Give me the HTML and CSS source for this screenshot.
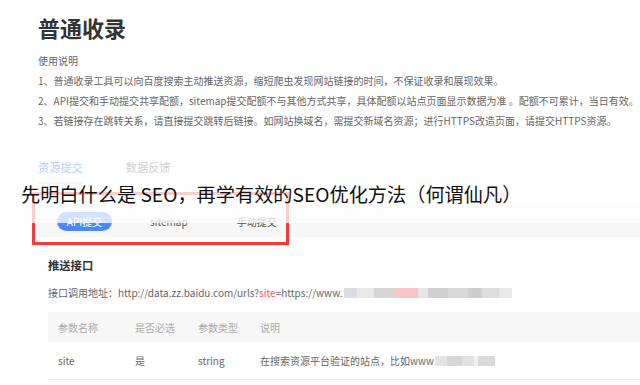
FILE: index.html
```html
<!DOCTYPE html>
<html lang="zh">
<head>
<meta charset="utf-8">
<title>普通收录</title>
<link rel="stylesheet" href="styles.css">
</head>
<body>
<div class="page">
  <h1 class="title">普通收录</h1>
  <div class="intro">
    <p>使用说明</p>
    <p>1、普通收录工具可以向百度搜索主动推送资源，缩短爬虫发现网站链接的时间，不保证收录和展现效果。</p>
    <p>2、API提交和手动提交共享配额，sitemap提交配额不与其他方式共享，具体配额以站点页面显示数据为准 。配额不可累计，当日有效。</p>
    <p>3、若链接存在跳转关系，请直接提交跳转后链接。如网站换域名，需提交新域名资源；进行HTTPS改造页面，请提交HTTPS资源。</p>
  </div>
  <div class="tabs">
    <span class="tab active">资源提交</span>
    <span class="tab">数据反馈</span>
  </div>
  <div class="subbar">
    <span class="pill">API提交</span>
    <span class="sub sitemap">sitemap</span>
    <span class="sub manual">手动提交</span>
  </div>
  <div class="section">
    <h2 class="sec-title">推送接口</h2>
    <p class="addr">接口调用地址：http://data.zz.baidu.com/urls?<span class="red">site</span>=https://www.<span class="mosaic m1"></span></p>
    <div class="table">
      <div class="row head">
        <span class="c1">参数名称</span><span class="c2">是否必选</span><span class="c3">参数类型</span><span class="c4">说明</span>
      </div>
      <div class="row body">
        <span class="c1">site</span><span class="c2">是</span><span class="c3">string</span><span class="c4">在搜索资源平台验证的站点，比如www<span class="mosaic m2"></span></span>
      </div>
    </div>
  </div>
</div>
<div class="redbox"></div>
<div class="band"></div>
<div class="caption">先明白什么是 SEO，再学有效的SEO优化方法（何谓仙凡）</div>
</body>
</html>
```
FILE: styles.css
```css
html, body {
  margin: 0;
  padding: 0;
  background: #fff;
}
body {
  width: 640px;
  height: 385px;
  overflow: hidden;
  position: relative;
  font-family: "Noto Sans CJK SC", "Noto Sans", sans-serif;
  color: #666;
}
.page {
  padding-left: 38px;
}
.title {
  margin: 12px 0 0;
  font-size: 22px;
  line-height: 30px;
  font-weight: 700;
  color: #333;
}
.intro {
  margin-top: 9px;
  font-size: 10px;
  line-height: 20px;
  color: #666;
  white-space: nowrap;
}
.intro p {
  margin: 0;
}
.tabs {
  margin-top: 26px;
  display: flex;
  gap: 43px;
  font-size: 11.2px;
  line-height: 20px;
}
.tab {
  color: #cfcfcf;
  padding-bottom: 5px;
  border-bottom: 2px solid transparent;
}
.tab.active {
  color: #b9cdf3;
  border-bottom-color: #c6d7f7;
}
.subbar {
  margin: 22px 0 0 -2px;
  height: 31px;
  background: #f7f7f7;
  display: flex;
  align-items: center;
  padding-left: 21px;
  font-size: 10px;
  color: #555;
}
.pill {
  width: 55px;
  height: 19px;
  border-radius: 10px;
  background: #4b8af5;
  color: #fff;
  display: flex;
  align-items: center;
  justify-content: center;
}
.sitemap {
  margin-left: 38px;
}
.manual {
  margin-left: 49px;
}
.section {
  padding-left: 10px;
}
.sec-title {
  margin: 18px 0 0;
  font-size: 11.3px;
  line-height: 20px;
  font-weight: 700;
  color: #333;
}
.addr {
  margin: 8px 0 0;
  font-size: 10px;
  line-height: 20px;
  color: #666;
  white-space: nowrap;
  display: flex;
  align-items: center;
}
.red {
  color: #f55;
}
.mosaic {
  display: inline-block;
  height: 10px;
}
.m1 {
  width: 168px;
  margin-left: 1px;
  background: linear-gradient(90deg, #dcdde2 0 8%, #e8e8e8 8% 18%, #d6d6d6 18% 30%, #f2c9cc 30% 34%, #f8c4c8 34% 44%, #e6e6e6 44% 50%, #cfcfcf 50% 62%, #d9d9d9 62% 74%, #cdcdcd 74% 82%, #dedede 82% 92%, #e8e8e8 92% 100%);
}
.m2 {
  width: 60px;
  margin-left: 1px;
  vertical-align: -1px;
  background: linear-gradient(90deg, #e4e4e4 0 20%, #d6d6d6 20% 45%, #e2e2e2 45% 65%, #f0f0f0 65% 72%, #dadada 72% 100%);
}
.table {
  margin-top: 9px;
  font-size: 10px;
}
.row {
  display: flex;
  align-items: center;
  padding-left: 10px;
  white-space: nowrap;
}
.row.head {
  height: 30px;
  background: #f7f7f7;
  color: #aaa;
}
.row.body {
  height: 37px;
  border-bottom: 1px solid #eee;
  color: #666;
}
.c1 { width: 77px; }
.c2 { width: 63px; }
.c3 { width: 62px; }
.c4 { display: flex; align-items: center; }
.redbox {
  position: absolute;
  left: 32px;
  top: 192px;
  width: 251px;
  height: 47px;
  border: 3px solid #f43a3a;
}
.band {
  position: absolute;
  left: 0;
  top: 178px;
  width: 640px;
  height: 45px;
  background: rgba(255, 255, 255, 0.75);
}
.caption {
  position: absolute;
  left: 21px;
  top: 180px;
  font-size: 19.2px;
  line-height: 28px;
  color: #111;
  white-space: nowrap;
}
```
